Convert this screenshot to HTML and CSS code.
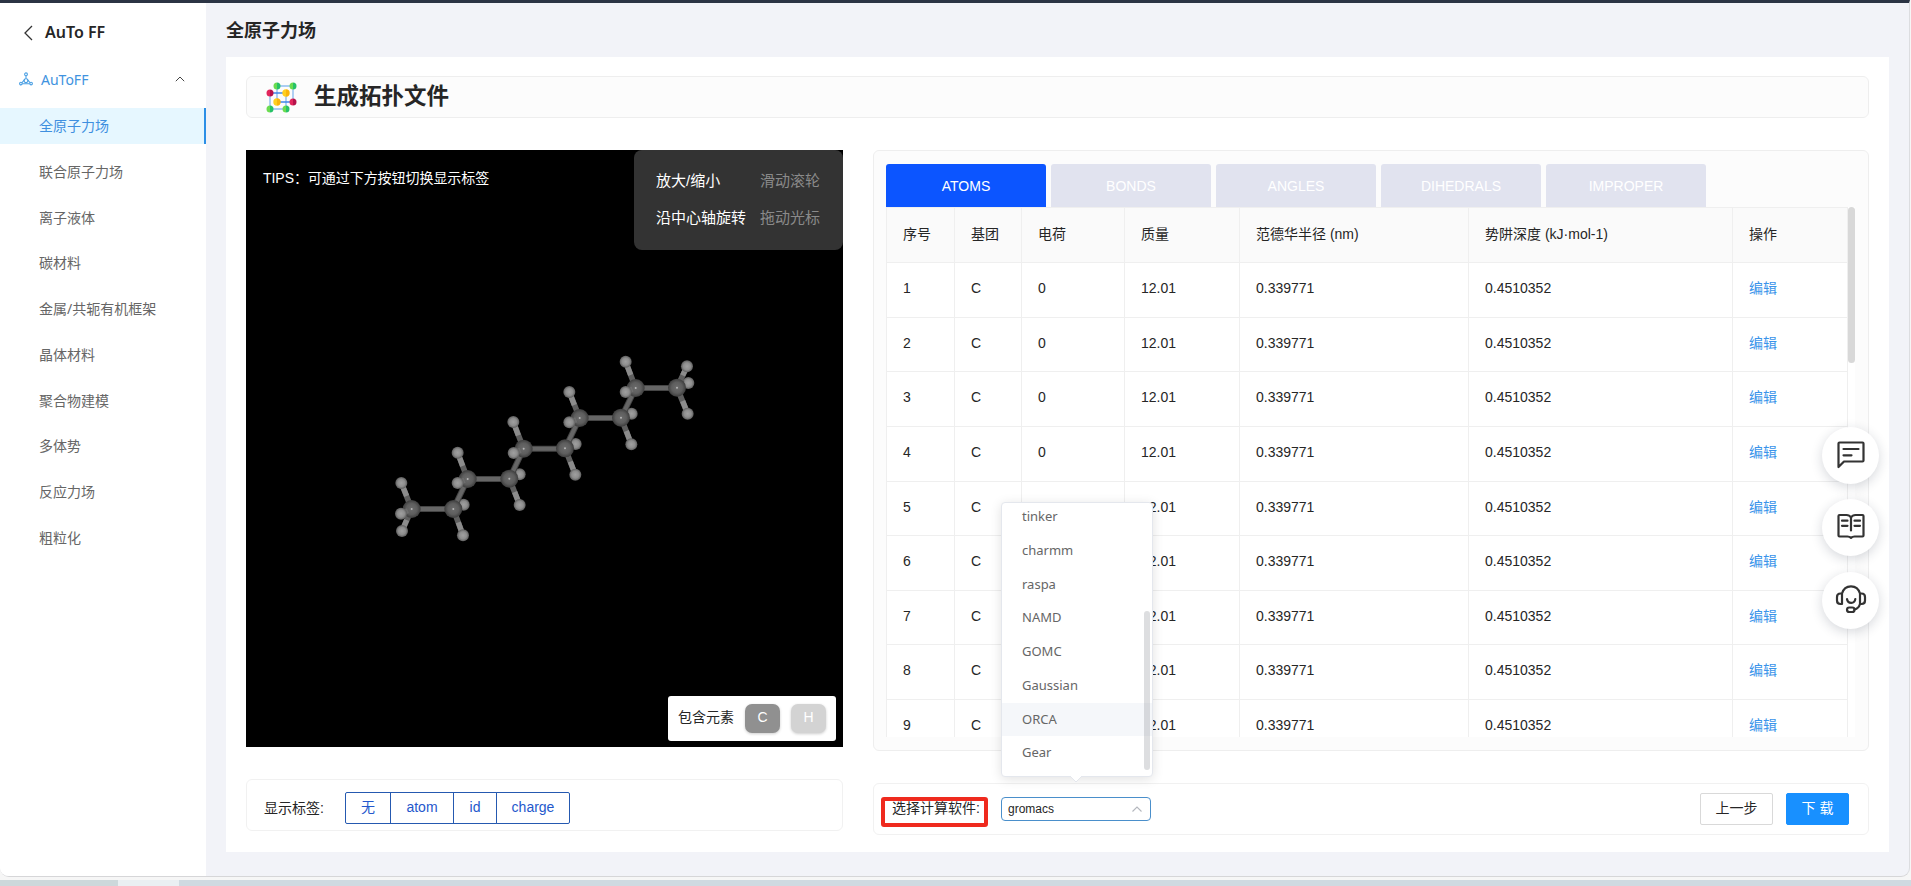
FILE: index.html
```
<!DOCTYPE html>
<html lang="zh-CN">
<head>
<meta charset="utf-8">
<title>AuTo FF</title>
<link rel="stylesheet" href="styles.css">
</head>
<body>
<div class="window">
  <aside class="sidebar">
    <div class="brand">
      <svg class="back" width="10" height="16" viewBox="0 0 10 16"><path d="M9 1 2 8l7 7" fill="none" stroke="#333" stroke-width="1.3"/></svg>
      <span>AuTo FF</span>
    </div>
    <div class="group">
      <svg width="14" height="14" viewBox="0 0 14 14" fill="none" stroke="#4a9fe3" stroke-width="1.1"><circle cx="7" cy="2.3" r="1.4"/><circle cx="7" cy="8.7" r="1.9"/><circle cx="1.9" cy="11.6" r="1.3"/><circle cx="12.1" cy="11.6" r="1.3"/><path d="M5.600 7.300 3.200 10.600M8.400 7.300 10.800 10.600M3.300 11.800h7.400M7 3.700v3"/></svg>
      <span>AuToFF</span>
      <svg class="fold" width="10" height="6" viewBox="0 0 10 6"><path d="M.8 5.2 5 1l4.200 4.200" fill="none" stroke="#444" stroke-width="1"/></svg>
    </div>
    <nav class="menu">
      <a class="item active">全原子力场</a>
      <a class="item">联合原子力场</a>
      <a class="item">离子液体</a>
      <a class="item">碳材料</a>
      <a class="item">金属/共轭有机框架</a>
      <a class="item">晶体材料</a>
      <a class="item">聚合物建模</a>
      <a class="item">多体势</a>
      <a class="item">反应力场</a>
      <a class="item">粗粒化</a>
    </nav>
  </aside>
  <main class="main">
    <h1 class="page-title">全原子力场</h1>
    <section class="page">
      <header class="section-head">
        <svg width="32" height="32" viewBox="0 0 32 32">
          <defs>
            <linearGradient id="gg"><stop offset=".5" stop-color="#6bdc50"/><stop offset=".5" stop-color="#27c267"/></linearGradient>
            <linearGradient id="gr"><stop offset=".5" stop-color="#e2265c"/><stop offset=".5" stop-color="#b5124a"/></linearGradient>
            <linearGradient id="gy"><stop offset=".5" stop-color="#ffcf1f"/><stop offset=".5" stop-color="#f9b50c"/></linearGradient>
          </defs>
          <g fill="none" stroke="#8fbdf0" stroke-width="1.400"><path d="M12 5h16v15.500M5 11.500v16.500h16.500M12 5v15.500M21 11.500v16.500"/><path d="M5 12H20M12 21H28" stroke="#3f87e8"/></g>
          <circle cx="12" cy="5" r="3.500" fill="url(#gg)"/><circle cx="28" cy="5" r="3.500" fill="url(#gg)"/>
          <circle cx="5" cy="12" r="3.500" fill="url(#gr)"/><circle cx="21" cy="12" r="3.700" fill="url(#gy)"/>
          <circle cx="12" cy="21" r="3.700" fill="url(#gy)"/><circle cx="28" cy="21" r="3.500" fill="url(#gr)"/>
          <circle cx="5" cy="28" r="3.500" fill="url(#gg)"/><circle cx="21" cy="28" r="3.500" fill="url(#gg)"/>
        </svg>
        <h2>生成拓扑文件</h2>
      </header>
      <div class="columns">
        <div class="left">
          <div class="viewer">
            <svg class="molecule" width="597" height="597" viewBox="0 0 597 597">
              <defs>
                <radialGradient id="c"><stop offset="0" stop-color="#6c6c6c"/><stop offset=".6" stop-color="#5e5e5e"/><stop offset="1" stop-color="#3c3c3c"/></radialGradient>
                <radialGradient id="h"><stop offset="0" stop-color="#a0a0a0"/><stop offset=".6" stop-color="#8d8d8d"/><stop offset="1" stop-color="#5c5c5c"/></radialGradient>
                <g id="C"><circle r="27" fill="url(#c)"/><circle r="3" fill="#b5b5b5"/></g>
                <circle id="H" r="18" fill="url(#h)"/>
              </defs>
              <g transform="translate(134 190) scale(.33333)">
                <g><use href="#H" x="251" y="494"/><use href="#H" x="419" y="403"/><use href="#H" x="587" y="312"/><use href="#H" x="755" y="221"/><use href="#H" x="925" y="129"/></g>
                <path d="M95 507H220L263 417H388L431 326H555L599 234H723L767 144H891" fill="none" stroke="#454545" stroke-width="18"/>
                <path d="M95 507H220L263 417H388L431 326H555L599 234H723L767 144H891" fill="none" stroke="#666" stroke-width="12"/>
                <path d="M95 507 64 429M95 507 66 573M220 507l29 79M263 417l-30-79M388 416l31 79M431 326l-31-80M555 325l31 79M599 234l-31-78M723 233l31 80M767 144l-30-79M891 143l30-64M891 143l32 78" stroke="#5f5f5f" stroke-width="17"/>
                <path d="M80 468 64 429M80 540 66 573M235 547l14 39M248 378l-15-40M404 456l15 39M415 286l-15-40M571 365l15 39M583 195l-15-39M739 273l15 40M752 105l-15-40M908 106l13-27M908 183l15 38" stroke="#8c8c8c" stroke-width="16"/>
                <g><use href="#C" x="95" y="507"/><use href="#C" x="220" y="507"/><use href="#C" x="263" y="417"/><use href="#C" x="388" y="416"/><use href="#C" x="431" y="326"/><use href="#C" x="555" y="325"/><use href="#C" x="599" y="234"/><use href="#C" x="723" y="233"/><use href="#C" x="767" y="144"/><use href="#C" x="891" y="143"/></g>
                <path d="M63 521 84 512M233 429l21-8M401 339l21-8M568 247l21-8M737 156l21-8" stroke="#6e6e6e" stroke-width="16"/>
                <g><use href="#H" x="64" y="429"/><use href="#H" x="63" y="521"/><use href="#H" x="66" y="573"/><use href="#H" x="249" y="586"/><use href="#H" x="233" y="338"/><use href="#H" x="233" y="429"/><use href="#H" x="419" y="495"/><use href="#H" x="400" y="246"/><use href="#H" x="401" y="339"/><use href="#H" x="586" y="404"/><use href="#H" x="568" y="156"/><use href="#H" x="568" y="247"/><use href="#H" x="754" y="313"/><use href="#H" x="737" y="65"/><use href="#H" x="737" y="156"/><use href="#H" x="921" y="79"/><use href="#H" x="923" y="221"/></g>
              </g>
            </svg>
            <div class="tips">TIPS：可通过下方按钮切换显示标签</div>
            <dl class="help"><dt>放大/缩小</dt><dd>滑动滚轮</dd><dt>沿中心轴旋转</dt><dd>拖动光标</dd></dl>
            <div class="legend"><span class="legend-name">包含元素</span><span class="chip chip-c">C</span><span class="chip chip-h">H</span></div>
          </div>
          <div class="bar labels">
            <span>显示标签:</span>
            <div class="segments"><button class="s1">无</button><button class="s2">atom</button><button class="s3">id</button><button class="s4">charge</button></div>
          </div>
        </div>
        <div class="right">
          <div class="panel">
            <div class="tabs"><span class="tab on">ATOMS</span><span class="tab">BONDS</span><span class="tab">ANGLES</span><span class="tab">DIHEDRALS</span><span class="tab">IMPROPER</span></div>
            <div class="scroller">
              <div class="table">
                <div class="row head"><span>序号</span><span>基团</span><span>电荷</span><span>质量</span><span>范德华半径 (nm)</span><span>势阱深度 (kJ·mol-1)</span><span>操作</span></div>
                <div class="row"><span>1</span><span>C</span><span>0</span><span>12.01</span><span>0.339771</span><span>0.4510352</span><span><a>编辑</a></span></div>
                <div class="row"><span>2</span><span>C</span><span>0</span><span>12.01</span><span>0.339771</span><span>0.4510352</span><span><a>编辑</a></span></div>
                <div class="row"><span>3</span><span>C</span><span>0</span><span>12.01</span><span>0.339771</span><span>0.4510352</span><span><a>编辑</a></span></div>
                <div class="row"><span>4</span><span>C</span><span>0</span><span>12.01</span><span>0.339771</span><span>0.4510352</span><span><a>编辑</a></span></div>
                <div class="row"><span>5</span><span>C</span><span>0</span><span>12.01</span><span>0.339771</span><span>0.4510352</span><span><a>编辑</a></span></div>
                <div class="row"><span>6</span><span>C</span><span>0</span><span>12.01</span><span>0.339771</span><span>0.4510352</span><span><a>编辑</a></span></div>
                <div class="row"><span>7</span><span>C</span><span>0</span><span>12.01</span><span>0.339771</span><span>0.4510352</span><span><a>编辑</a></span></div>
                <div class="row"><span>8</span><span>C</span><span>0</span><span>12.01</span><span>0.339771</span><span>0.4510352</span><span><a>编辑</a></span></div>
                <div class="row"><span>9</span><span>C</span><span>0</span><span>12.01</span><span>0.339771</span><span>0.4510352</span><span><a>编辑</a></span></div>
              </div>
              <div class="track"><div class="thumb"></div></div>
            </div>
          </div>
          <div class="bar actions">
            <span class="marked">选择计算软件:</span>
            <div class="select">
              <span>gromacs</span>
              <svg width="12" height="8" viewBox="0 0 12 8"><path d="M1.500 6.500 6 2l4.500 4.500" fill="none" stroke="#b4b7bd" stroke-width="1.100"/></svg>
              <div class="dropdown">
                <ul>
                  <li>tinker</li><li>charmm</li><li>raspa</li><li>NAMD</li><li>GOMC</li><li>Gaussian</li><li class="hover">ORCA</li><li>Gear</li>
                </ul>
                <div class="drop-thumb"></div>
                <svg class="drop-arrow" width="14" height="7" viewBox="0 0 14 7"><path d="M1 0 7 6l6-6" fill="#fff" stroke="#e4e7ed"/></svg>
              </div>
            </div>
            <button class="btn prev">上一步</button>
            <button class="btn primary">下 载</button>
          </div>
        </div>
      </div>
    </section>
  </main>
  <div class="floats">
    <div class="float"><svg width="32" height="32" viewBox="0 0 32 32"><path d="M3.500 28V4.500q0-1 1-1h23q1 0 1 1v17q0 1-1 1H9Z"/><path d="M8.500 10h15M8.500 16.300h8"/></svg></div>
    <div class="float"><svg width="32" height="32" viewBox="0 0 32 32"><path d="M16 5.500Q14.500 3 11.500 3H4.500q-1 0-1 1V23.500q0 1 1 1h8q2 0 3.500 1.300Q17.500 24.500 19.500 24.500h8q1 0 1-1V4q0-1-1-1h-7Q17.500 3 16 5.500V18.500M7 8.700h5.500M7 13.800h5.500M19.500 8.700h5.500M19.500 13.800h5.500"/></svg></div>
    <div class="float"><svg width="32" height="32" viewBox="0 0 32 32"><path d="M7 9.500C8.300 5 11.500 2.300 16 2.300s7.700 2.700 9 7.200M7 9.500v10.500H5.500Q2 20 2 16.500V13q0-3.500 3.500-3.500ZM25 9.500v10.500h1.500q3.500 0 3.500-3.500V13q0-3.500-3.500-3.500ZM25 20q-1.300 4.500-5.500 5.500M12 15q.5 3.800 4.200 3.800T20.300 15"/><rect x="12" y="23.500" width="7.500" height="4.500" rx="2.250"/></svg></div>
  </div>
</div>
<div class="desktop"></div>
</body>
</html>
```
FILE: styles.css
```
* { box-sizing: border-box; }
body {
  margin: 0;
  height: 886px;
  overflow: hidden;
  background: #f6f6f6;
  font: 14px/20px "Liberation Sans", "Noto Sans CJK SC", sans-serif;
  color: #262626;
}
h1, h2, ul, dl, dd { margin: 0; padding: 0; }
button { font: inherit; }
.window {
  position: relative;
  display: flex;
  width: 1910px;
  height: 877px;
  border-top: 3px solid #2b3444;
  border-right: 1px solid #dcdde0;
  border-bottom: 1px solid #d6d6d8;
  border-radius: 0 0 9px 9px;
  background: #f2f3f8;
  overflow: hidden;
}
.desktop {
  height: 6px;
  margin-top: 3px;
  background: linear-gradient(90deg, #cdd8db 118px, #eaeff2 118px 179px, #cfdae1 179px);
}

.sidebar {
  width: 206px;
  background: #fff;
  font-family: "Noto Sans", "Noto Sans CJK SC", sans-serif;
}
.brand {
  display: flex;
  align-items: center;
  gap: 12px;
  height: 58px;
  padding-left: 23px;
  font-size: 16px;
  font-weight: 600;
}
.brand .back { margin-top: 2px; }
.brand span { margin-top: -1px; }
.group {
  display: flex;
  align-items: center;
  height: 36px;
  padding: 0 21px 0 19px;
  color: #4093e0;
}
.group span { flex: 1; margin-left: 8px; padding-top: 1px; }
.menu { display: flex; flex-direction: column; gap: 9.750px; padding-top: 11px; }
.item { height: 36px; padding-left: 39px; line-height: 35px; color: #666; }
.item.active { color: #3e8fdf; background: #e6f7ff; border-right: 2px solid #2c8fe6; }

.main { flex: 1; padding: 0 20px; }
.page-title { height: 54px; font-size: 18px; line-height: 56px; font-weight: 700; }
.page { height: 795px; padding: 19px 20px 0; background: #fff; }
.section-head {
  display: flex;
  align-items: center;
  gap: 17px;
  height: 42px;
  padding-left: 18px;
  border: 1px solid #eee;
  border-radius: 6px;
  background: #fcfcfc;
}
.section-head h2 { font-size: 22.500px; line-height: 38px; }
.columns { display: flex; gap: 30px; margin-top: 32px; }
.left { width: 597px; }
.right { flex: 1; }

.viewer { position: relative; height: 597px; background: #000; color: #fff; }
.molecule { display: block; }
.tips { position: absolute; left: 17px; top: 18px; letter-spacing: -.05px; }
.help {
  position: absolute;
  right: 0;
  top: 0;
  display: grid;
  grid-template-columns: 104px 1fr;
  align-content: start;
  row-gap: 17px;
  width: 209px;
  height: 100px;
  padding: 21px 0 0 22px;
  border-radius: 8px;
  background: #333;
  font-size: 15px;
}
.help dd { color: #8a8a8a; }
.legend {
  position: absolute;
  right: 7px;
  bottom: 6px;
  display: flex;
  align-items: center;
  width: 168px;
  height: 45px;
  padding-left: 10px;
  border-radius: 3px;
  background: #fff;
  color: #262626;
}
.legend-name { margin-top: -4px; }
.chip {
  width: 35px;
  height: 29px;
  margin-left: 11px;
  border-radius: 7px;
  line-height: 27px;
  text-align: center;
  color: #fff;
  box-shadow: 0 1px 3px rgba(0, 0, 0, .2);
}
.chip-c { background: #909090; }
.chip-h { background: #d3d3d3; }

.bar {
  display: flex;
  align-items: center;
  height: 52px;
  border: 1px solid #f1f1f1;
  border-radius: 6px;
}
.labels { margin-top: 32px; padding-left: 17px; }
.segments { display: flex; margin-left: 22px; padding-top: 5px; }
.labels > span { width: 59px; padding-top: 5px; white-space: nowrap; }
.segments button {
  height: 32px;
  margin-left: -1px;
  padding: 0 0 2px;
  border: 1px solid #2559b0;
  background: #fff;
  color: #2458cc;
}
.segments .s1 { width: 46px; margin-left: 0; border-radius: 2px 0 0 2px; }
.segments .s2 { width: 64px; }
.segments .s3 { width: 44px; }
.segments .s4 { width: 74px; border-radius: 0 2px 2px 0; }

.panel {
  height: 601px;
  padding: 13px 13px 0 12px;
  border: 1px solid #eee;
  border-radius: 6px;
  background: #fcfcfc;
}
.tabs { display: flex; gap: 5px; }
.tab {
  width: 160px;
  height: 43px;
  border-radius: 3px 3px 0 0;
  line-height: 45px;
  text-align: center;
  background: #e1e3ef;
  color: #fff;
}
.tab.on { background: #0c55ff; }
.scroller { display: flex; width: 969px; height: 530px; overflow: hidden; background: #fff; }
.table { width: 962px; border: 1px solid #efefef; border-width: 1px 1px 0; }
.row {
  display: grid;
  grid-template-columns: 68px 67px 103px 115px 229px 264px 114px;
  height: 54.625px;
  border-bottom: 1px solid #efefef;
  line-height: 51.500px;
}
.row.head { height: 55px; background: #fafafa; line-height: 53px; }
.row span { padding-left: 16px; border-right: 1px solid #efefef; }
.row span:last-child { border-right: 0; }
.row a { color: #3a94ea; }
.track { width: 7px; }
.thumb { height: 156px; border-radius: 4px; background: #d8d8d8; }

.actions { margin-top: 32px; padding: 0 19px 0 7px; }
.marked {
  width: 107px;
  height: 30px;
  margin-top: 6px;
  padding-left: 7px;
  border: 4px solid #ef2a1e;
  border-radius: 3px;
  line-height: 15px;
  white-space: nowrap;
}
.select {
  position: relative;
  display: flex;
  align-items: center;
  justify-content: space-between;
  width: 150px;
  height: 24px;
  margin: 0 auto 0 13px;
  padding: 0 7px 0 6px;
  border: 1px solid #4a8fcb;
  border-radius: 4px;
  font-size: 12px;
}
.dropdown {
  position: absolute;
  left: -1px;
  bottom: 43px;
  width: 152px;
  height: 275px;
  border: 1px solid #e4e7ed;
  border-radius: 4px;
  background: #fff;
  box-shadow: 0 2px 12px rgba(0, 0, 0, .12);
  font: 13px/33.750px "Noto Sans", sans-serif;
  color: #666;
}
.dropdown ul { list-style: none; padding-top: 0; margin-top: -3px; }
.dropdown li { height: 33.750px; padding-left: 20px; }
.dropdown .hover { background: #f5f7fa; }
.drop-thumb {
  position: absolute;
  right: 2px;
  bottom: 6px;
  width: 6px;
  height: 159px;
  border-radius: 3px;
  background: rgba(144, 147, 153, .3);
}
.drop-arrow { position: absolute; left: 67px; bottom: -7px; }
.btn {
  height: 32px;
  padding: 0 0 2px;
  border: 1px solid #d9d9d9;
  border-radius: 2px;
  background: #fff;
  color: #262626;
}
.prev { width: 73px; margin-right: 13px; }
.primary { width: 63px; border-color: #1890ff; background: #1890ff; color: #fff; }

.floats {
  position: absolute;
  right: 30px;
  top: 423.500px;
  display: flex;
  flex-direction: column;
  gap: 15.500px;
}
.float {
  display: flex;
  align-items: center;
  justify-content: center;
  width: 57px;
  height: 57px;
  border-radius: 50%;
  background: #fff;
  box-shadow: 0 3px 12px rgba(30, 40, 60, .18);
}
.float svg { fill: none; stroke: #333; stroke-width: 2.200; stroke-linejoin: round; stroke-linecap: round; }
```
